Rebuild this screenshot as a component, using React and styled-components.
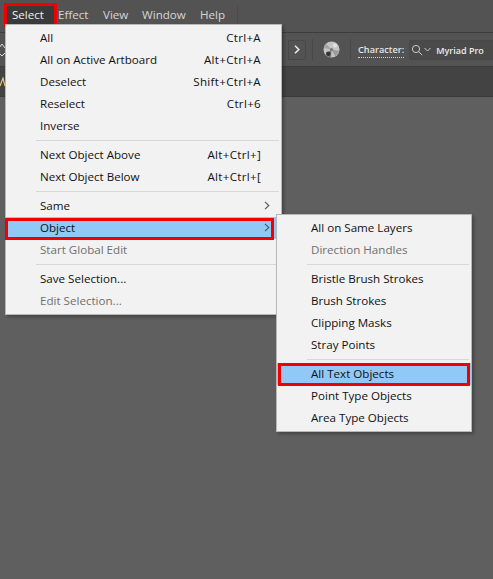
import styled, { createGlobalStyle } from 'styled-components';

const GlobalStyle = createGlobalStyle`
  html, body { margin: 0; padding: 0; background: #5f5f5f; }
  body { font-family: "Open Sans", "Noto Sans", sans-serif; overflow: hidden; }
`;

const Page = styled.div`
  position: relative;
  width: 493px;
  height: 579px;
  overflow: hidden;
  display: flex;
  flex-direction: column;
  background: #5f5f5f;
`;
const MenuBar = styled.div`
  height: 33px;
  flex: none;
  display: flex;
  align-items: flex-start;
  padding: 6px 0 0 7px;
  box-sizing: border-box;
  background: #535353;
  border-bottom: 1px solid #3d3d3d;
`;
const MenuTitle = styled.div`
  width: ${p => p.$w}px;
  height: 18px;
  flex: none;
  line-height: 18px;
  padding-left: ${p => (p.$active ? 5 : 4)}px;
  box-sizing: border-box;
  font-size: 11.6px;
  color: ${p => (p.$active ? '#f0f0f0' : '#d6d6d6')};
  background: ${p => (p.$active ? '#3a3a3a' : 'transparent')};
  outline: ${p => (p.$active ? '3px solid #f00000' : 'none')};
`;
const BarDivider = styled.div`
  width: 1px;
  height: 20px;
  margin-left: 10px;
  background: #4a4a4a;
`;
const OptionsBar = styled.div`
  height: 34px;
  flex: none;
  display: flex;
  align-items: center;
  box-sizing: border-box;
  background: #535353;
  border-bottom: 1px solid #3d3d3d;
`;
const LeftStub = styled.div`
  width: 288px;
  flex: none;
  display: flex;
  flex-direction: column;
  gap: 2px;
`;
const TabBar = styled.div`
  height: 30px;
  flex: none;
  display: flex;
  align-items: center;
  box-sizing: border-box;
  background: #434343;
  border-bottom: 1px solid #3a3a3a;
`;
const NextButton = styled.div`
  width: 18px;
  height: 20px;
  flex: none;
  box-sizing: border-box;
  margin-right: 6px;
  display: flex;
  align-items: center;
  justify-content: center;
  border: 1px solid #484848;
  border-radius: 0 3px 3px 0;
`;
const Divider = styled.div`
  width: 1px;
  height: 22px;
  flex: none;
  background: #484848;
`;
const GlobeWrap = styled.div`
  margin: 0 10px 0 10px;
  display: flex;
  flex: none;
`;
const CharLabel = styled.span`
  flex: none;
  font-size: 9.2px;
  font-weight: 600;
  color: #e4e4e4;
  margin-left: 7px;
  padding-top: 2px;
  padding-bottom: 1px;
  border-bottom: 1px dotted #cfcfcf;
`;
const FontField = styled.div`
  width: 100px;
  height: 20px;
  flex: none;
  margin-left: 5px;
  display: flex;
  align-items: center;
  gap: 1px;
  padding-left: 1px;
  box-sizing: border-box;
  background: #4a4a4a;
  border: 1px solid #484848;
  border-right: none;
  border-radius: 3px 0 0 3px;
`;
const FontName = styled.span`
  font-size: 9px;
  font-weight: 600;
  color: #ececec;
  margin-left: 4px;
  padding-top: 1px;
  white-space: nowrap;
`;
const Dropdown = styled.div`
  position: absolute;
  left: ${p => p.$x}px;
  top: ${p => p.$y}px;
  width: ${p => p.$w}px;
  box-sizing: border-box;
  padding: 2px 0;
  background: #f2f2f2;
  border: 1px solid #b8b8b8;
  box-shadow: 2px 2px 3px rgba(0, 0, 0, 0.28);
  z-index: ${p => p.$z};
`;
const Row = styled.div`
  position: relative;
  height: 22px;
  display: flex;
  align-items: center;
  justify-content: space-between;
  box-sizing: border-box;
  padding: 0 20px 2px 34px;
  font-size: 11.6px;
  color: ${p => (p.$off ? '#6f6f6f' : '#111')};
  background: ${p => (p.$hot ? '#90c8f6' : 'transparent')};
`;
const Shortcut = styled.span`
  letter-spacing: 0.3px;
`;
const Marked = styled.span`
  position: absolute;
  left: ${p => p.$l}px;
  right: ${p => p.$r}px;
  top: ${p => p.$t}px;
  bottom: -1px;
  border: 3px solid #f00000;
  pointer-events: none;
`;
const Sep = styled.div`
  height: 1px;
  margin: 3px 2px 3px 30px;
  background: #d7d7d7;
`;
const Arrow = styled.svg`
  width: 6px;
  height: 9px;
  margin-right: -9px;
`;

const Chevron = () => (
  <Arrow viewBox="0 0 6 9"><path d="M1 .8 4.800 4.500 1 8.2" fill="none" stroke="#555" strokeWidth="1.1" /></Arrow>
);

const MenuRow = ({ label, keys, off, hot, mark, sub }) => (
  <Row $off={off} $hot={hot}>
    <span>{label}</span>
    {keys && <Shortcut>{keys}</Shortcut>}
    {sub && <Chevron />}
    {mark && <Marked $l={mark[0]} $r={mark[1]} $t={mark[2]} />}
  </Row>
);

export default function App() {
  return (
    <Page>
      <GlobalStyle />
      <MenuBar>
        <MenuTitle $active $w={47}>Select</MenuTitle>
        <MenuTitle $w={45}>Effect</MenuTitle>
        <MenuTitle $w={39}>View</MenuTitle>
        <MenuTitle $w={58}>Window</MenuTitle>
        <MenuTitle $w={31}>Help</MenuTitle>
        <BarDivider />
      </MenuBar>
      <OptionsBar>
        <LeftStub>
          <svg width="5" height="8" viewBox="0 0 5 8"><path d="M-1 6 2 2 5 6" fill="none" stroke="#ddd" /></svg>
          <svg width="5" height="6" viewBox="0 0 5 6"><path d="M-1 1 2 4 5 1" fill="none" stroke="#ddd" /></svg>
        </LeftStub>
        <NextButton>
          <svg width="6" height="9" viewBox="0 0 6 9"><path d="M1 .8 4.800 4.500 1 8.2" fill="none" stroke="#eee" strokeWidth="1.5" /></svg>
        </NextButton>
        <Divider />
        <GlobeWrap>
          <svg width="17" height="17" viewBox="0 0 17 17">
            <circle cx="8.5" cy="8.5" r="8" fill="#c4c4c4" />
            <path d="M8.500 8.500 3 2.700a8 8 0 0 0-2 4.300Z" fill="#a4a4a4" />
            <path d="M8.500 8.500 16.300 10a8 8 0 0 1-4 5.500Z" fill="#9c9c9c" />
            <path d="M8.500 8.500 8 16.500a8 8 0 0 1-5-2.800Z" fill="#7c7c7c" />
            <circle cx="5.300" cy="12.700" r="2.300" fill="#333" />
            <circle cx="8.500" cy="8.500" r="1.600" fill="#777" />
            <circle cx="12" cy="4.500" r="2" fill="#e2e2e2" />
          </svg>
        </GlobeWrap>
        <Divider />
        <CharLabel>Character:</CharLabel>
        <FontField>
          <svg width="12" height="12" viewBox="0 0 12 12"><circle cx="5" cy="5" r="3.6" fill="none" stroke="#ccc" /><path d="m7.600 7.600 3.600 3.600" stroke="#ccc" /></svg>
          <svg width="7" height="5" viewBox="0 0 7 5"><path d="M.5 1 3.500 4 6.500 1" fill="none" stroke="#ccc" /></svg>
          <FontName>Myriad Pro</FontName>
        </FontField>
      </OptionsBar>
      <TabBar>
        <svg width="5" height="10" viewBox="0 0 5 10"><path d="M0 9 3 1 5 9" fill="none" stroke="#e8c27a" strokeWidth="1.2" /></svg>
      </TabBar>

      <Dropdown $x={5} $y={24} $w={277} $z={1}>
        <MenuRow label="All" keys="Ctrl+A" />
        <MenuRow label="All on Active Artboard" keys="Alt+Ctrl+A" />
        <MenuRow label="Deselect" keys="Shift+Ctrl+A" />
        <MenuRow label="Reselect" keys="Ctrl+6" />
        <MenuRow label="Inverse" />
        <Sep />
        <MenuRow label="Next Object Above" keys="Alt+Ctrl+]" />
        <MenuRow label="Next Object Below" keys="Alt+Ctrl+[" />
        <Sep />
        <MenuRow label="Same" sub />
        <MenuRow label="Object" sub hot mark={[-1, 7, 1]} />
        <MenuRow label="Start Global Edit" off />
        <Sep />
        <MenuRow label="Save Selection..." />
        <MenuRow label="Edit Selection..." off />
      </Dropdown>

      <Dropdown $x={276} $y={214} $w={196} $z={2}>
        <MenuRow label="All on Same Layers" />
        <MenuRow label="Direction Handles" off />
        <Sep />
        <MenuRow label="Bristle Brush Strokes" />
        <MenuRow label="Brush Strokes" />
        <MenuRow label="Clipping Masks" />
        <MenuRow label="Stray Points" />
        <Sep />
        <MenuRow label="All Text Objects" hot mark={[1, 1, 0]} />
        <MenuRow label="Point Type Objects" />
        <MenuRow label="Area Type Objects" />
      </Dropdown>
    </Page>
  );
}
